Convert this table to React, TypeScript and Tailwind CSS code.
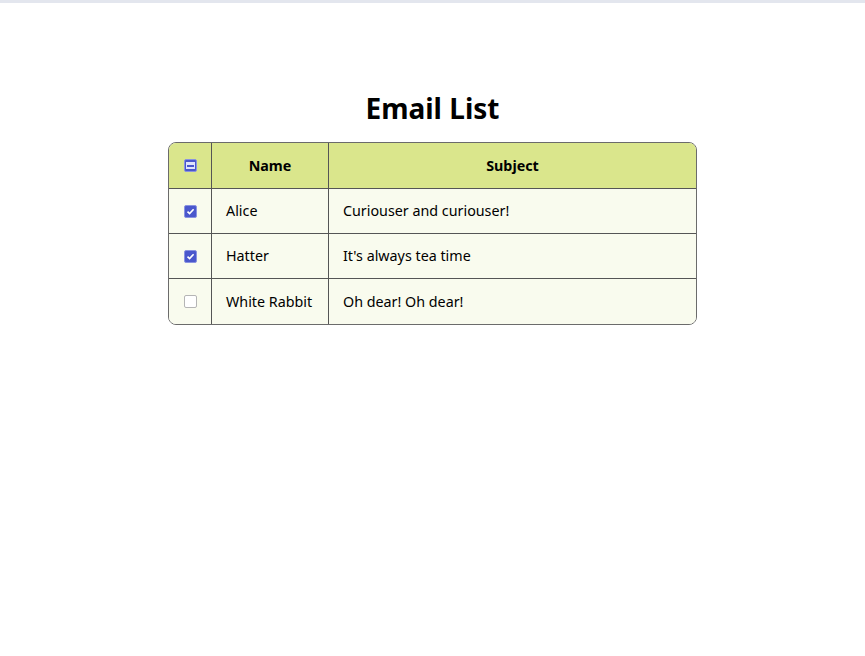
import React from "react";

function Box({ state }: { state: "on" | "off" | "mixed" }) {
  if (state === "off") {
    return (
      <span className="inline-block w-[13px] h-[13px] rounded-[2px] border border-[#b5b5b5] bg-white align-middle" />
    );
  }
  return (
    <span className="inline-flex w-[13px] h-[13px] rounded-[2px] border border-[#8a93e0] bg-[#4a57cc] items-center justify-center align-middle">
      {state === "on" ? (
        <svg width="9" height="9" viewBox="0 0 9 9">
          <path d="M1.5 4.6 L3.6 6.6 L7.6 2.2" stroke="white" strokeWidth="1.6" fill="none" />
        </svg>
      ) : (
        <span className="w-[9px] h-[7px] bg-[#dfe3fb] flex items-center justify-center">
          <span className="w-[7px] h-[2px] bg-[#4a57cc]" />
        </span>
      )}
    </span>
  );
}

const rows: { name: string; subject: string; checked: boolean }[] = [
  { name: "Alice", subject: "Curiouser and curiouser!", checked: true },
  { name: "Hatter", subject: "It's always tea time", checked: true },
  { name: "White Rabbit", subject: "Oh dear! Oh dear!", checked: false },
];

export default function App() {
  return (
    <div className="min-h-[656px] bg-white text-black" style={{ fontFamily: '"Noto Sans", "Open Sans", sans-serif' }}>
      <div className="h-[3px] bg-[#e3e6ee]" />
      <div className="flex flex-col items-center pt-[86px]">
        <h1 className="text-[28px] font-bold leading-[38px]">Email List</h1>
        <div className="mt-[15px] w-[529px] border border-[#6b6b6b] rounded-[8px] overflow-hidden text-[14.3px]">
          <div className="flex h-[46px] bg-[#dae68c] border-b border-[#555]">
            <div className="w-[43px] border-r border-[#555] flex items-center justify-center">
              <Box state="mixed" />
            </div>
            <div className="w-[117px] border-r border-[#555] flex items-center justify-center font-bold">Name</div>
            <div className="flex-1 flex items-center justify-center font-bold">Subject</div>
          </div>
          {rows.map((r, i) => (
            <div
              key={r.name}
              className={`flex h-[45px] bg-[#f9fbee] ${i < rows.length - 1 ? "border-b border-[#555]" : ""}`}
            >
              <div className="w-[43px] border-r border-[#555] flex items-center justify-center">
                <Box state={r.checked ? "on" : "off"} />
              </div>
              <div className="w-[117px] border-r border-[#555] flex items-center pl-[14px] whitespace-nowrap">{r.name}</div>
              <div className="flex-1 flex items-center px-[14px] whitespace-nowrap">{r.subject}</div>
            </div>
          ))}
        </div>
      </div>
    </div>
  );
}
